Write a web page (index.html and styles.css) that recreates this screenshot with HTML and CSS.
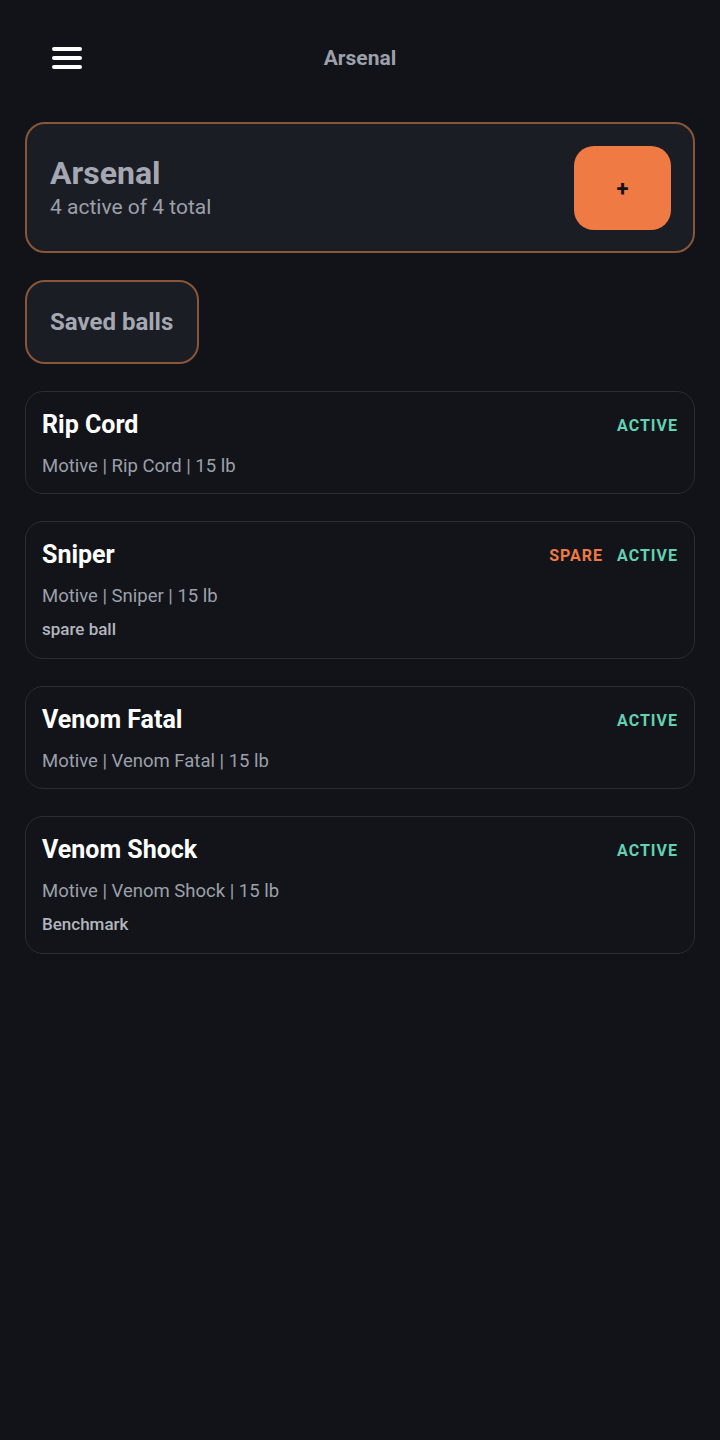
FILE: index.html
```html
<!DOCTYPE html>
<html lang="en">
<head>
  <meta charset="UTF-8" />
  <meta name="viewport" content="width=device-width, initial-scale=1.0" />
  <title>Arsenal</title>
  <link rel="stylesheet" href="styles.css">
</head>
<body>
  <div class="page">
    <header class="topbar">
      <button class="menu" aria-label="Menu">
        <span></span><span></span><span></span>
      </button>
      <div class="topbar-title">Arsenal</div>
      <div></div>
    </header>

    <section class="summary">
      <div>
        <h1>Arsenal</h1>
        <p>4 active of 4 total</p>
      </div>
      <button class="add">+</button>
    </section>

    <button class="saved">Saved balls</button>

    <div class="list">
      <div class="ball">
        <div class="ball-head">
          <h3>Rip Cord</h3>
          <div class="tags"><span class="tag active">ACTIVE</span></div>
        </div>
        <div class="ball-sub">Motive | Rip Cord | 15 lb</div>
      </div>

      <div class="ball">
        <div class="ball-head">
          <h3>Sniper</h3>
          <div class="tags"><span class="tag spare">SPARE</span><span class="tag active">ACTIVE</span></div>
        </div>
        <div class="ball-sub">Motive | Sniper | 15 lb</div>
        <div class="ball-note">spare ball</div>
      </div>

      <div class="ball">
        <div class="ball-head">
          <h3>Venom Fatal</h3>
          <div class="tags"><span class="tag active">ACTIVE</span></div>
        </div>
        <div class="ball-sub">Motive | Venom Fatal | 15 lb</div>
      </div>

      <div class="ball">
        <div class="ball-head">
          <h3>Venom Shock</h3>
          <div class="tags"><span class="tag active">ACTIVE</span></div>
        </div>
        <div class="ball-sub">Motive | Venom Shock | 15 lb</div>
        <div class="ball-note">Benchmark</div>
      </div>
    </div>
  </div>
</body>
</html>
```

FILE: styles.css
```css
* {
  box-sizing: border-box;
}
body {
  margin: 0;
  background: #111318;
  font-family: Roboto, 'Noto Sans', sans-serif;
  color: #ffffff;
}
button {
  font-family: inherit;
}
.page {
  padding: 34px 25px 40px 25px;
}
.topbar {
  display: grid;
  grid-template-columns: 1fr auto 1fr;
  align-items: center;
  height: 48px;
  margin-bottom: 40px;
}
.menu {
  display: flex;
  flex-direction: column;
  gap: 5px;
  width: 30px;
  padding: 0;
  margin-left: 27px;
  background: none;
  border: none;
}
.menu span {
  display: block;
  height: 4px;
  width: 30px;
  border-radius: 2px;
  background: #ffffff;
}
.topbar-title {
  font-size: 21px;
  font-weight: 700;
  color: #9ca0aa;
}
.summary {
  display: flex;
  align-items: center;
  justify-content: space-between;
  padding: 22px 22px 21px 23px;
  background: #1a1d24;
  border: 2px solid #8a5638;
  border-radius: 20px;
}
.summary h1 {
  margin: 0;
  font-size: 32px;
  font-weight: 700;
  line-height: 34px;
  color: #a5a8b2;
}
.summary p {
  margin: 4px 0 0;
  font-size: 21px;
  line-height: 26px;
  color: #9ca0aa;
}
.add {
  width: 97px;
  height: 84px;
  border: none;
  border-radius: 20px;
  background: #f07a43;
  color: #111318;
  font-size: 22px;
  font-weight: 700;
}
.saved {
  display: block;
  margin: 27px 0;
  height: 84px;
  padding: 0 24px 0 23px;
  background: #1a1d24;
  border: 2px solid #8a5638;
  border-radius: 20px;
  font-size: 24px;
  font-weight: 700;
  color: #a5a8b2;
}
.list {
  display: flex;
  flex-direction: column;
  gap: 27px;
}
.ball {
  padding: 18px 16px 14px 16px;
  background: #121419;
  border: 1px solid #2a2d35;
  border-radius: 18px;
}
.ball-head {
  display: flex;
  align-items: center;
  justify-content: space-between;
}
.ball-head h3 {
  margin: 0;
  font-size: 25px;
  line-height: 30px;
  font-weight: 700;
  color: #ffffff;
}
.tags {
  display: flex;
  gap: 14px;
}
.tag {
  font-size: 16px;
  font-weight: 700;
  letter-spacing: 1px;
}
.tag.active {
  color: #62d1b4;
}
.tag.spare {
  color: #ee7a45;
}
.ball-sub {
  margin-top: 13px;
  font-size: 18.5px;
  line-height: 26px;
  color: #9ca0aa;
}
.ball-note {
  margin: 10px 0 5px;
  font-size: 17px;
  line-height: 20px;
  font-weight: 500;
  color: #b3b6be;
}
```
